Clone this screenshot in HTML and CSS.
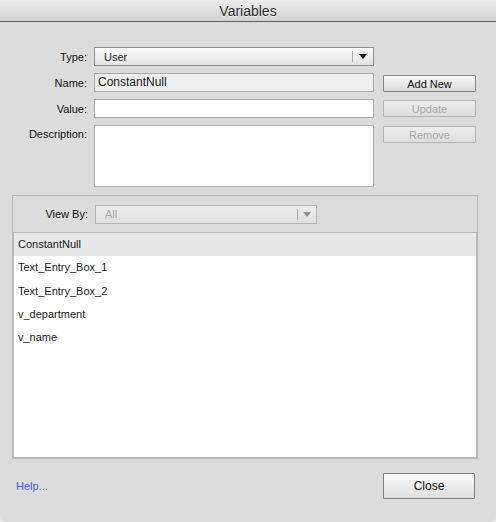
FILE: index.html
```html
<!DOCTYPE html>
<html>
<head>
<meta charset="utf-8">
<title>Variables</title>
<link rel="stylesheet" href="styles.css">
</head>
<body>
<div class="window">
  <div class="titlebar">Variables</div>
  <div class="form">
    <label class="lbl">Type:</label>
    <div class="select">
      <span class="sel-text">User</span>
      <span class="sel-sep"></span>
      <span class="sel-arrow"></span>
    </div>
    <div></div>

    <label class="lbl">Name:</label>
    <div class="input name">ConstantNull</div>
    <button class="btn btn-center">Add New</button>

    <label class="lbl">Value:</label>
    <div class="input"></div>
    <button class="btn btn-top" disabled>Update</button>

    <label class="lbl lbl-top">Description:</label>
    <div class="input textarea"></div>
    <button class="btn btn-top" disabled>Remove</button>
  </div>

  <div class="panel">
    <div class="panel-head">
      <label class="lbl">View By:</label>
      <div class="select disabled">
        <span class="sel-text">All</span>
        <span class="sel-sep"></span>
        <span class="sel-arrow"></span>
      </div>
    </div>
    <ul class="list">
      <li class="row selected">ConstantNull</li>
      <li class="row">Text_Entry_Box_1</li>
      <li class="row">Text_Entry_Box_2</li>
      <li class="row">v_department</li>
      <li class="row">v_name</li>
    </ul>
  </div>

  <div class="footer">
    <a class="help" href="#">Help...</a>
    <button class="btn close">Close</button>
  </div>
</div>
</body>
</html>
```
FILE: styles.css
```css
html, body {
  margin: 0;
  padding: 0;
  background: #e9e9e9;
}
body {
  font-family: "Liberation Sans", Arial, sans-serif;
  font-size: 11px;
  color: #1a1a1a;
}
.window {
  width: 496px;
  height: 522px;
  background: #dcdcdc;
  border-radius: 0 0 5px 5px;
  overflow: hidden;
  display: flex;
  flex-direction: column;
}
.titlebar {
  height: 21px;
  line-height: 22px;
  text-align: center;
  font-size: 14px;
  color: #2e2e2e;
  background: linear-gradient(#ededed, #d2d2d2);
  border-bottom: 1px solid #5e5e5e;
  text-shadow: 0 1px 0 rgba(255,255,255,0.6);
}
.form {
  display: grid;
  grid-template-columns: 82px 280px 95px;
  column-gap: 7px;
  grid-template-rows: 19px 19px 19px 62px;
  row-gap: 7px;
  padding: 25px 0 0 5px;
}
.form > :nth-child(3n) { margin-left: 2px; }
.lbl {
  text-align: right;
  align-self: center;
  color: #111;
}
.lbl-top {
  align-self: start;
  padding-top: 3px;
}
.select {
  box-sizing: border-box;
  height: 19px;
  border: 1px solid #8e8e8e;
  background: linear-gradient(#fafafa, #e2e2e2);
  display: flex;
  align-items: center;
}
.sel-text {
  flex: 1;
  padding-left: 9px;
}
.sel-sep {
  width: 1px;
  height: 11px;
  background: #aaa;
  margin-right: 6px;
}
.sel-arrow {
  width: 0;
  height: 0;
  border-left: 4px solid transparent;
  border-right: 4px solid transparent;
  border-top: 5px solid #111;
  margin-right: 6px;
}
.input {
  box-sizing: border-box;
  border: 1px solid #a9a9a9;
  background: #fff;
  padding: 0 3px;
  line-height: 17px;
}
.input.name {
  background: #eeeeee;
  font-size: 12px;
}
.input.textarea {
  border-color: #b2b2b2;
}
.btn {
  box-sizing: border-box;
  height: 17px;
  padding: 0;
  margin: 0;
  font-family: "Liberation Sans", Arial, sans-serif;
  font-size: 11px;
  color: #111;
  border: 1px solid #858585;
  border-radius: 1px;
  background: linear-gradient(#f8f8f8, #dadada);
}
.btn:disabled {
  color: #a9a9a9;
  border-color: #b4b4b4;
  background: linear-gradient(#ececec, #dedede);
}
.btn-center { align-self: end; }
.btn-top { align-self: start; margin-top: 1px; }

.panel {
  margin: 8px 18px 0 12px;
  display: flex;
  flex-direction: column;
}
.panel-head {
  border: 1px solid #b9b9b9;
  display: flex;
  align-items: center;
  box-sizing: border-box;
  height: 38px;
}
.panel-head .lbl {
  width: 75px;
  margin-right: 7px;
}
.panel-head .select {
  width: 222px;
  height: 19px;
  border-color: #b3b3b3;
  background: linear-gradient(#ececec, #e0e0e0);
  color: #a8a8a8;
}
.panel-head .sel-arrow { border-top-color: #8e8e8e; margin-right: 5px; }
.panel-head .sel-sep { margin-right: 5px; }
.list {
  list-style: none;
  margin: 0;
  padding: 0;
  height: 226px;
  box-sizing: border-box;
  border: 2px solid #b8bbbe;
  border-top: none;
  background: #fff;
}
.row {
  height: 23.3px;
  line-height: 23px;
  padding-left: 4px;
  font-size: 11px;
}
.row.selected {
  background: #e8e8e8;
}
.footer {
  display: flex;
  justify-content: space-between;
  align-items: center;
  padding: 14px 21px 0 16px;
}
.help {
  color: #3b62dd;
  text-decoration: none;
  font-size: 11px;
}
.close {
  width: 92px;
  height: 26px;
  font-size: 12px;
  border-color: #7f7f7f;
  background: linear-gradient(#fbfbfb, #dedede);
}
```
